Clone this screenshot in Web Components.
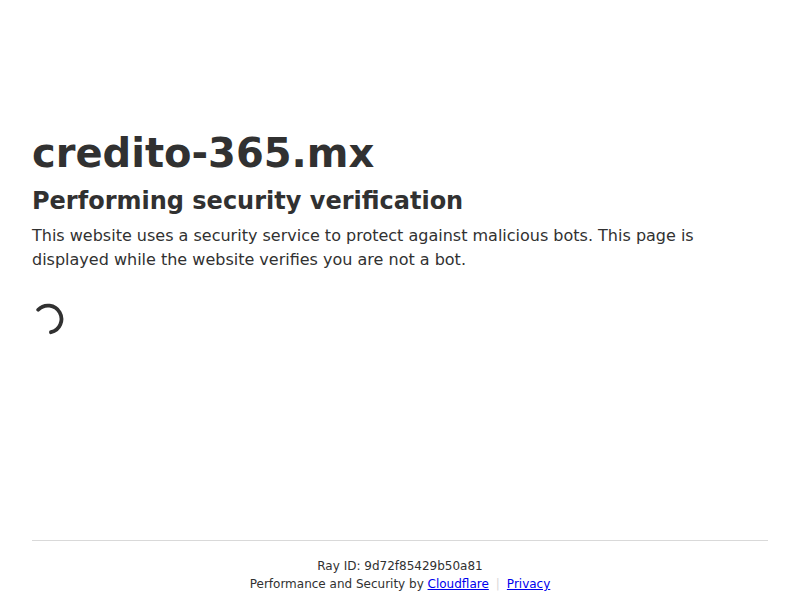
<!DOCTYPE html>
<html lang="en"><head><meta charset="utf-8"><title>Verification</title>
<style>
html,body{margin:0;padding:0;height:100%;overflow:hidden;background:#fff}
body{font-family:"DejaVu Sans",sans-serif;color:#313131}
</style></head><body>
<cf-page>
<cf-main slot="main">
<cf-spinner></cf-spinner>
</cf-main>
<cf-footer slot="footer"></cf-footer>
</cf-page>
<script>
customElements.define('cf-page',class extends HTMLElement{constructor(){super();this.attachShadow({mode:'open'}).innerHTML=`<style>
:host{display:flex;flex-direction:column;justify-content:space-between;height:600px;box-sizing:border-box;padding:0 32px 7px}
.t{flex:1}
</style><div class="t"><slot name="main"></slot></div><slot name="footer"></slot>`}});
customElements.define('cf-main',class extends HTMLElement{constructor(){super();this.attachShadow({mode:'open'}).innerHTML=`<style>
:host{display:block;padding-top:128px}
h1{margin:0;font-size:40px;line-height:50px;font-weight:700;color:#313131}
h2{margin:7px 0 0;font-size:24px;line-height:32px;font-weight:700;color:#313131}
p{margin:7px 0 0;font-size:16px;line-height:24px;color:#313131}
.s{margin-top:31px}
</style><h1>credito-365.mx</h1><h2>Performing security verification</h2><p>This website uses a security service to protect against malicious bots. This page is displayed while the website verifies you are not a bot.</p><div class="s"><slot></slot></div>`}});
customElements.define('cf-spinner',class extends HTMLElement{constructor(){super();this.attachShadow({mode:'open'}).innerHTML=`<style>
:host{display:block;width:32px;height:32px}svg{display:block}
</style><svg width="32" height="32" viewBox="0 0 32 32" fill="none"><path d="M6.2 6.7 A13.5 13.5 0 1 1 19 29.2" stroke="#313131" stroke-width="3.8" stroke-linecap="round"/></svg>`}});
customElements.define('cf-footer',class extends HTMLElement{constructor(){super();this.attachShadow({mode:'open'}).innerHTML=`<style>
:host{display:block;border-top:1px solid #d9d9d9;padding-top:16px;text-align:center;font-size:12px;line-height:18px;color:#313131}
a{color:#0000ee}
.sep{color:#d9d9d9;margin:0 7px}
</style><div>Ray ID: <code style="font:inherit">9d72f85429b50a81</code></div><div>Performance and Security by <a href="#">Cloudflare</a><span class="sep">|</span><a href="#">Privacy</a></div>`}});
</script></body></html>
